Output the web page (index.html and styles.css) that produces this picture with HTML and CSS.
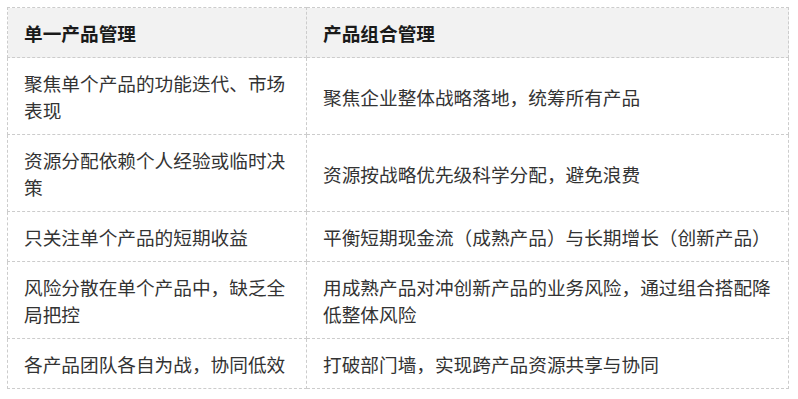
FILE: index.html
```html
<!DOCTYPE html>
<html lang="zh-CN">
<head>
<meta charset="utf-8">
<title>单一产品管理 vs 产品组合管理</title>
<link rel="stylesheet" href="styles.css">
</head>
<body>
<table class="compare">
  <colgroup>
    <col class="col-a">
    <col class="col-b">
  </colgroup>
  <thead>
    <tr><th>单一产品管理</th><th>产品组合管理</th></tr>
  </thead>
  <tbody>
    <tr><td>聚焦单个产品的功能迭代、市场表现</td><td>聚焦企业整体战略落地，统筹所有产品</td></tr>
    <tr><td>资源分配依赖个人经验或临时决策</td><td>资源按战略优先级科学分配，避免浪费</td></tr>
    <tr><td>只关注单个产品的短期收益</td><td>平衡短期现金流（成熟产品）与长期增长（创新产品）</td></tr>
    <tr><td>风险分散在单个产品中，缺乏全局把控</td><td>用成熟产品对冲创新产品的业务风险，通过组合搭配降低整体风险</td></tr>
    <tr><td>各产品团队各自为战，协同低效</td><td>打破部门墙，实现跨产品资源共享与协同</td></tr>
  </tbody>
</table>
</body>
</html>
```
FILE: styles.css
```css
html, body {
  margin: 0;
  padding: 0;
  background: #ffffff;
}
body {
  padding: 7px;
  font-family: "Noto Sans CJK SC", "Noto Sans", sans-serif;
  font-size: 18.67px;
  line-height: 27px;
  color: #333333;
}
.compare {
  border-collapse: collapse;
  table-layout: fixed;
  width: 781px;
  border: 1px dashed #cccccc;
}
.col-a { width: 299px; }
.col-b { width: 482px; }
.compare th,
.compare td {
  border: 1px dashed #cccccc;
  padding: 11px 16px;
  text-align: left;
  vertical-align: middle;
}
.compare th {
  background: #f2f2f2;
  font-weight: 700;
  color: #1a1a1a;
}
.compare td {
  font-weight: 400;
}
```
